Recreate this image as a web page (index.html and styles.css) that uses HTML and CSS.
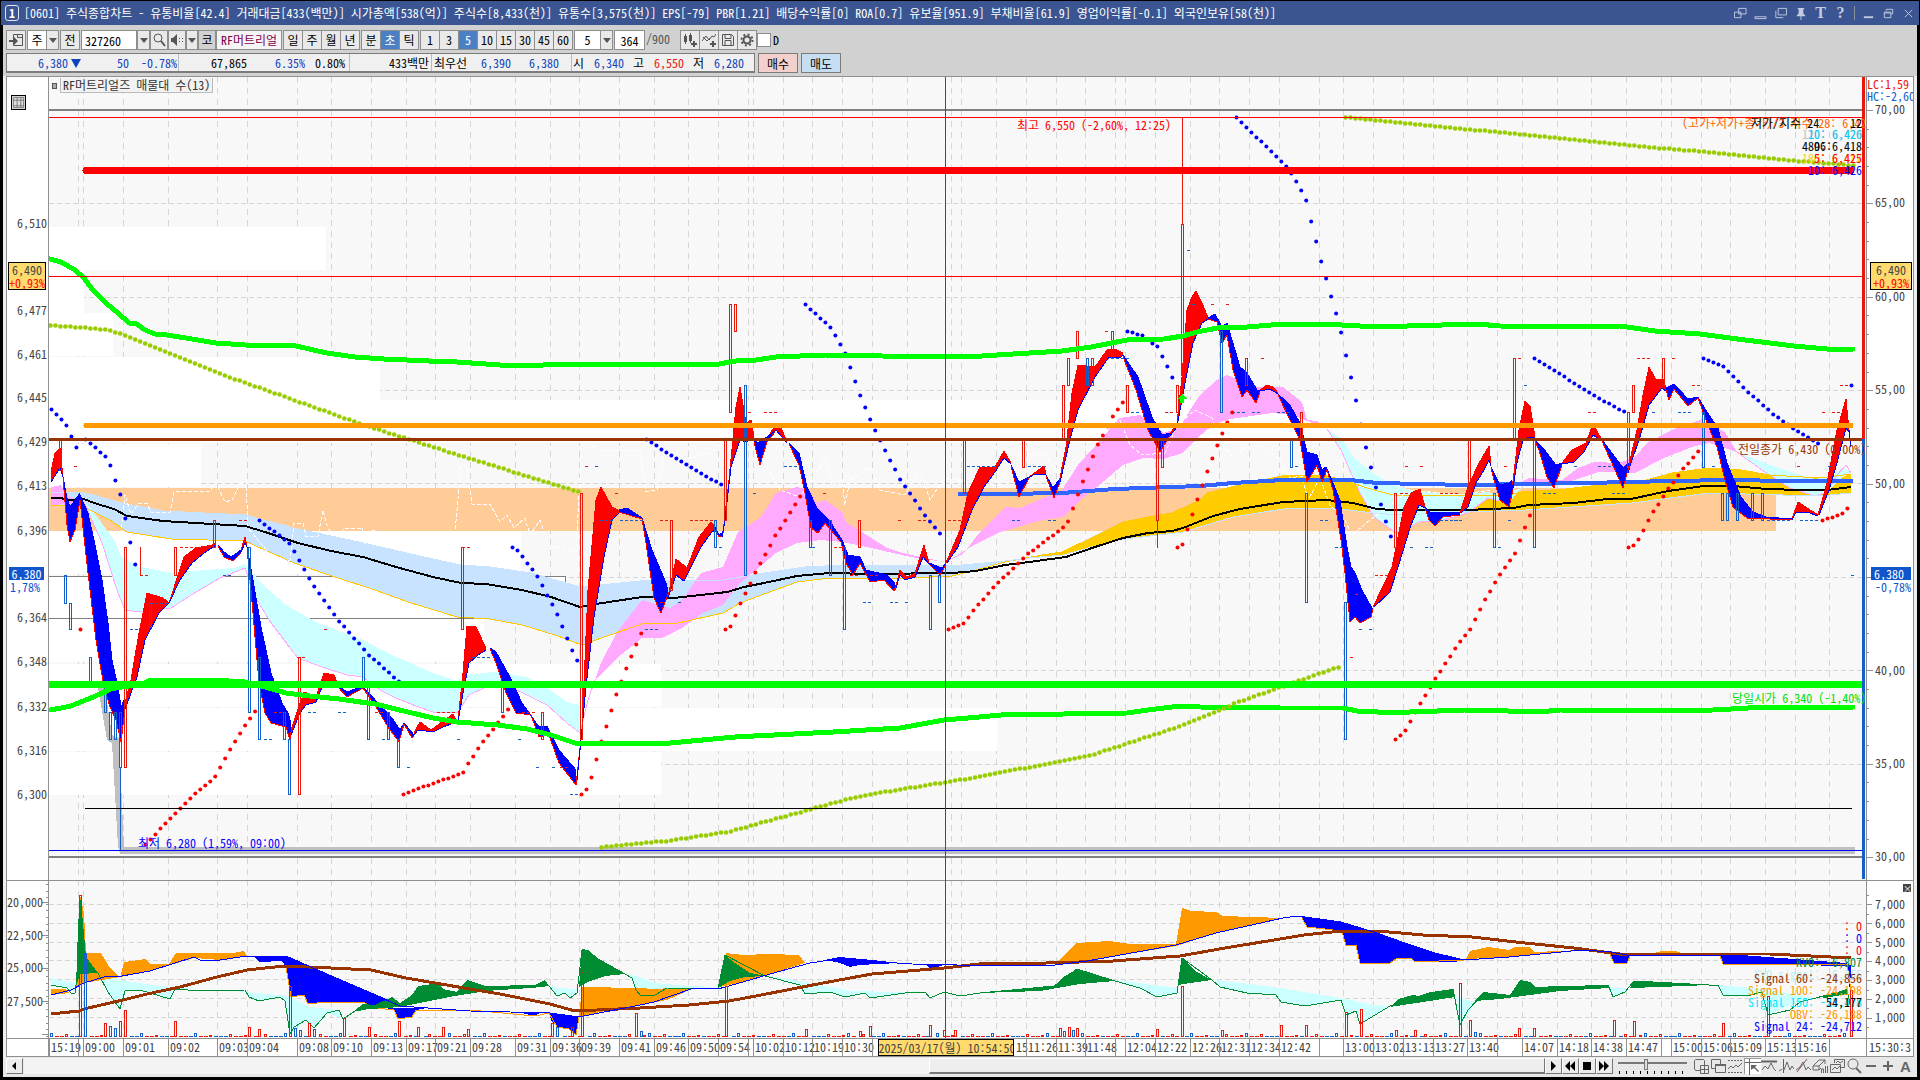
FILE: index.html
```html
<!DOCTYPE html>
<html lang="ko">
<head>
<meta charset="utf-8">
<title>[0601] 주식종합차트</title>
<link rel="stylesheet" href="styles.css">
</head>
<body>
<header class="titlebar">
  <span class="badge">1</span>
  <h1 class="title">[0601] 주식종합차트 - 유통비율[42.4] 거래대금[433(백만)] 시가총액[538(억)] 주식수[8,433(천)] 유통수[3,575(천)] EPS[-79] PBR[1.21] 배당수익률[0] ROA[0.7] 유보율[951.9] 부채비율[61.9] 영업이익률[-0.1] 외국인보유[58(천)]</h1>
  <div class="winbtns">
    <button aria-label="창 분리"><svg viewBox="0 0 14 14"><path d="M5 1.500h8v6h-8zM.5 5.500h7v6h-7z"/></svg></button>
    <button aria-label="숨기기"><svg viewBox="0 0 14 14"><path d="M1 10.500h12v2h-12z"/></svg></button>
    <button aria-label="복제"><svg viewBox="0 0 14 14"><path d="M4.500 1.500h9v7h-9zM2 4v7.500h8"/></svg></button>
    <button aria-label="고정"><svg viewBox="0 0 14 14"><path class="solid" d="M4 1h7v1l-1 1v4l2 2v1H3V9l2-2V3L4 2zM7 10h1v4H7z"/></svg></button>
    <button class="glyph" aria-label="글꼴">T</button>
    <button class="glyph" aria-label="도움말">?</button>
    <i class="sep"></i>
    <button aria-label="최소화"><svg viewBox="0 0 14 14"><path class="solid" d="M2 10h10v2H2z"/></svg></button>
    <button aria-label="이전 크기"><svg viewBox="0 0 14 14"><path d="M4.500 4V2.500h7v5H10M2.500 5.500h7v6h-7zM2 6.500h8"/></svg></button>
    <button aria-label="닫기"><svg viewBox="0 0 14 14"><path d="M3 3l8 8M11 3l-8 8"/></svg></button>
  </div>
</header>
<main class="client">
  <form class="tools">
    <button type="button" class="tb" aria-label="목록"><svg viewBox="0 0 14 14"><path d="M4.500 1.500h9v11h-9M4.500 1.500v11M8.500 1.500v3h5"/><path class="solid" d="M0 7h5V4l4 4-4 4V9H0z"/></svg></button>
    <span class="combo w32"><span>주</span><button type="button" class="arrow" aria-label="종류 선택"></button></span>
    <button type="button" class="tb">전</button>
    <input class="field w56" value="327260" aria-label="종목코드">
    <button type="button" class="arrow wide" aria-label="종목 이력"></button>
    <button type="button" class="tb slim" aria-label="종목 검색"><svg viewBox="0 0 14 14"><circle cx="6" cy="5" r="4"/><path d="M9 8l4 5" stroke-width="2"/></svg></button>
    <button type="button" class="tb slim" aria-label="음성"><svg viewBox="0 0 14 14"><path class="solid" d="M1 5h2l4-4v12L3 9H1z"/><path d="M9 5.500h1M9 8.500h1M12 5.500h1M12 8.500h1"/></svg></button>
    <button type="button" class="arrow" aria-label="음성 설정"></button>
    <span class="market">코</span><span class="name">RF머트리얼</span>
    <span class="group">
      <button type="button">일</button><button type="button">주</button><button type="button">월</button><button type="button">년</button>
    </span>
    <span class="group">
      <button type="button">분</button><button type="button" class="on">초</button><button type="button">틱</button>
    </span>
    <span class="group">
      <button type="button">1</button><button type="button">3</button><button type="button" class="on">5</button><button type="button">10</button><button type="button">15</button><button type="button">30</button><button type="button">45</button><button type="button">60</button>
    </span>
    <span class="combo w40"><span>5</span><button type="button" class="arrow" aria-label="간격 선택"></button></span>
    <input class="field w32" value="364" aria-label="표시 봉 수">
    <span class="total">/900</span>
    <span class="group icons">
      <button type="button" aria-label="지표 추가"><svg viewBox="0 0 14 14"><path class="solid" d="M1 3h3v6H1zM6 2h3v6H6z"/><path d="M2.500 1v10M7.500 0v10"/><path d="M8 11h6M11 8v6" stroke-width="2"/></svg></button>
      <button type="button" aria-label="추세 추가"><svg viewBox="0 0 14 14"><path d="M0 8l4-5 3 4 3-4 2 1 2-3M1 4l4 4 3-3"/><path d="M8 11h6M11 8v6" stroke-width="2"/></svg></button>
      <button type="button" aria-label="저장"><svg viewBox="0 0 14 14"><path d="M1.500 1.500h9l2 2v9h-11zM4 1.500v4h6v-4M4 12.500v-5h6v5"/></svg></button>
      <button type="button" aria-label="설정"><svg viewBox="0 0 14 14"><circle cx="7" cy="7" r="3.500" stroke-width="2"/><circle cx="7" cy="7" r="5.500" stroke-width="2" stroke-dasharray="2 2.300"/></svg></button>
    </span>
    <label class="check"><input type="checkbox">D</label>
  </form>
  <div class="info">
    <div class="quote">
      <span class="cell s1 dn"><b class="c72">6,380<i class="tri"></i></b><b class="c48">50</b><b class="c48">-0.78%</b></span>
      <span class="cell s2"><b class="c68">67,865</b><b class="c56 dn">6.35%</b><b class="c40">0.80%</b></span>
      <span class="cell s3"><b>433백만</b></span>
      <span class="cell s4"><b>최우선</b><b class="c44 dn">6,390</b><b class="c48 dn">6,380</b></span>
      <span class="cell s5"><b>시</b><b class="c40 dn">6,340</b><b class="c20">고</b><b class="c40 up">6,550</b><b class="c20">저</b><b class="c40 dn">6,280</b></span>
    </div>
    <button class="buy">매수</button>
    <button class="sell">매도</button>
  </div>

  <section class="chart">
    <div class="axis left main" id="leftMain">
      <button class="gridbtn" aria-label="데이터 표"><svg viewBox="0 0 14 14"><path d="M1.500 1.500h11v11h-11zM1.500 4.500h11M5.500 1.500v11M9.500 1.500v11M1.500 10.500h11"/></svg></button>
    </div>
    <div class="axis left sub" id="leftSub"></div>
    <div class="plot" id="plot">
      <svg id="canvas" viewBox="49 77 1817 961" preserveAspectRatio="none" role="img" aria-label="주가 차트"></svg>
      <div class="caption"><i></i><span>RF머트리얼즈 매물대 수(13)</span></div>
    </div>
    <div class="axis right main" id="rightMain"></div>
    <div class="axis right sub" id="rightSub"><button class="closepane" aria-label="지표 닫기">×</button></div>
    <div class="corner"></div>
    <div class="times" id="times"><span class="now">2025/03/17(월) 10:54:50</span></div>
    <div class="corner end">15:30:3</div>
  </section>

  <footer class="scroller">
    <button class="sb" aria-label="왼쪽으로"><svg viewBox="0 0 14 14"><path class="solid" d="M9 3v8L5 7z"/></svg></button>
    <div class="track"><div class="thumb"></div></div>
    <button class="sb" aria-label="재생"><svg viewBox="0 0 14 14"><path class="solid" d="M5 2v10l5-5z"/></svg></button>
    <button class="sb" aria-label="뒤로"><svg viewBox="0 0 14 14"><path class="solid" d="M7 2v10L2 7zM12 2v10L7 7z"/></svg></button>
    <button class="sb" aria-label="정지"><svg viewBox="0 0 14 14"><path class="solid" d="M3 3h8v8H3z"/></svg></button>
    <button class="sb" aria-label="앞으로"><svg viewBox="0 0 14 14"><path class="solid" d="M2 2v10l5-5zM7 2v10l5-5z"/></svg></button>
    <div class="speed"><input type="range" min="0" max="10" value="4" aria-label="속도"></div>
    <div class="pens">
      <button aria-label="추가"><svg viewBox="0 0 16 16"><path d="M7 12.500H2.500L1.500 11V2.500l1-1h8l1 1V7"/><path d="M7.500 7.500h8v8h-8zM11.500 7v8M7 11.500h8"/></svg></button>
      <button aria-label="겹치기"><svg viewBox="0 0 16 16"><path d="M1.500 1.500h9v9h-9z"/><path d="M5.500 6.500h10v8h-10z" fill="#e8e8e8"/><path class="solid" d="M5 6h11v2H5z"/></svg></button>
      <button aria-label="틀 고정"><svg viewBox="0 0 16 16"><path d="M1 2.500h14M1 14.500h14" stroke-dasharray="2 1"/><path d="M1 11l3-3 2 2 3-3 2 2 4-4"/></svg></button>
      <button class="on" aria-label="십자선"><svg viewBox="0 0 16 16"><path d="M4.500 0v16M0 3.500h16"/><path class="solid" d="M6 6h6l-2 2 4 4-1 1-4-4-3 2z"/></svg></button>
      <button aria-label="수평선"><svg viewBox="0 0 16 16"><path d="M0 3.500h16" stroke-width="2"/><path d="M1 12l3-4 3 3 3-6 3 6 2 2"/></svg></button>
      <button aria-label="수직선"><svg viewBox="0 0 16 16"><path class="hot" d="M5.500 1v14"/><path d="M1 13l3-2M6 12l3-8 3 8 2-4 2 3"/></svg></button>
      <button aria-label="추세선"><svg viewBox="0 0 16 16"><path class="hot" d="M2 14L12 1"/><path d="M1 12l4-3 3-5 3 8 2-3 3 3"/></svg></button>
      <button aria-label="모두 지우기"><svg viewBox="0 0 16 16"><path d="M1 8l6-6h6l-6 6zM1 8v4h6V8M7 12l2-2M13 2v4M9.500 15v-4h2v4M13.500 8v7M15.500 8v7"/></svg></button>
      <button aria-label="이미지"><svg viewBox="0 0 16 16"><path d="M5.500 5V1.500h10v8H12M1.500 6.500h10v8h-10z"/><path d="M3 12l3-3 2 2 3-3M7 5l2-2 2 2 3-2"/></svg></button>
      <button aria-label="돋보기"><svg viewBox="0 0 16 16"><circle cx="7" cy="6" r="5"/><path d="M10 10l5 5" stroke-width="2"/></svg></button>
      <button aria-label="축소"><svg viewBox="0 0 16 16"><path class="solid" d="M3 7h10v2H3z"/></svg></button>
      <button aria-label="확대"><svg viewBox="0 0 16 16"><path class="solid" d="M3 7h4V3h2v4h4v2H9v4H7V9H3z"/></svg></button>
      <button class="auto" aria-label="자동">A</button>
    </div>
  </footer>
</main>
<script src="chart.js"></script>
</body>
</html>
```

FILE: styles.css
```css
* { box-sizing: border-box; }
body {
  margin: 0;
  padding: 1px 1px 3px;
  min-height: 100vh;
  display: flex;
  flex-direction: column;
  background: #000;
  color: #000;
  font: 12px/18px "Noto Sans Mono CJK KR", "Noto Sans CJK KR", sans-serif;
  overflow: hidden;
}
button, input { font: inherit; color: inherit; margin: 0; padding: 0; border-radius: 0; }
button { border: 0; background: none; }
svg { display: block; fill: none; stroke: currentColor; }
svg .solid { fill: currentColor; stroke: none; }

.titlebar { display: flex; align-items: center; height: 24px; padding: 0 4px; gap: 5px; background: #3a5591; color: #fff; white-space: nowrap; }
.badge { width: 14px; height: 16px; line-height: 14px; border: 1px solid #dfe6f5; border-radius: 3px; text-align: center; font-weight: bold; }
.title { margin: 0; font-size: 12px; font-weight: normal; flex: 1; overflow: hidden; }
.winbtns { display: flex; align-items: center; gap: 7px; color: #c2cbe2; }
.winbtns button { width: 13px; height: 14px; }
.winbtns .glyph { font: bold 16px/14px "Liberation Serif", serif; }
.winbtns .sep { width: 1px; height: 14px; background: #8a8f9c; }

.client { flex: 1; display: flex; flex-direction: column; margin: 0 2px; background: #d1d1d1; }

.tools { display: flex; height: 20px; margin: 5px 3px 3px; white-space: nowrap; }
.tools > * { height: 20px; flex: none; }
.tb, .group button, .combo, .field, .market, .name, .arrow { border: 1px solid #8e8e8e; background: #e9e9e9; text-align: center; }
.tb { width: 20px; margin-right: 1px; }
.tb.slim { width: 18px; margin-right: 0; }
.tb svg, .group svg { width: 14px; height: 14px; margin: 0 auto; color: #555; }
.combo { display: flex; background: #fff; margin-right: 1px; }
.combo > span { flex: 1; }
.combo .arrow { border-width: 0 0 0 1px; height: 18px; }
.w32 { width: 32px; }
.w40 { width: 39px; }
.w56 { width: 56px; }
.field { background: #fff; text-align: left; padding-left: 3px; }
.field.w32 { width: 31px; text-align: center; padding: 0; }
.arrow { width: 12px; }
.arrow::after { content: ""; display: block; width: 0; margin: 0 auto; border: 4px solid transparent; border-top: 5px solid #555; border-bottom: 0; }
.arrow.wide { width: 13px; }
.market { width: 18px; background: #d1d1d1; }
.name { width: 66px; background: #f4f4f4; color: #80004d; margin-right: 1px; overflow: hidden; }
.group { display: flex; margin-right: 1px; }
.group button { width: 20px; margin-right: -1px; }
.group button:last-child { margin-right: 0; }
.group .on { background: #4b80c4; color: #fff; }
.total { width: 33px; color: #555; padding-left: 1px; }
.icons { margin-left: 2px; margin-right: 0; }
.check { display: flex; align-items: center; gap: 2px; }
.check input { appearance: none; width: 14px; height: 14px; border: 1px solid #8e8e8e; background: #fff; }

.info { display: flex; height: 20px; margin: 0 3px 3px; gap: 3px; white-space: nowrap; line-height: 17px; }
.quote { display: flex; width: 749px; background: #f0f0f0; border: 1px solid #7c7c7c; border-width: 1px 1px 2px; }
.cell { display: flex; border-right: 1px solid #bbb; }
.cell:last-child { border: 0; }
.cell b { font-weight: normal; text-align: right; }
.s1 { width: 172px; }
.s2 { width: 171px; }
.s3 { width: 82px; justify-content: flex-end; padding-right: 2px; }
.s4 { width: 140px; padding-left: 2px; }
.s5 { padding-left: 1px; }
.c72 { width: 74px; }
.c68 { width: 68px; }
.c56 { width: 58px; }
.c48 { width: 48px; }
.c44 { width: 44px; }
.c40 { width: 40px; }
.c20 { width: 20px; }
.dn { color: #1144bb; }
.up { color: #e0200c; }
.tri { display: inline-block; margin-left: 3px; border: 5px solid transparent; border-top: 9px solid #1144bb; border-bottom: 0; }
.buy, .sell { width: 40px; border: 1px solid #7c7c7c; background: #f4d0cc; }
.sell { background: #c6def4; }

.chart {
  flex: 1;
  display: grid;
  grid-template-columns: 43px 1fr 48px;
  grid-template-rows: 804fr 158fr 19px;
  padding: 0 3px;
  background: #eee;
  color: #444;
}
.chart > * { background: #fff; border: 0 solid #909090; }
.axis { position: relative; overflow: hidden; }
.left { grid-column: 1; border-width: 1px 1px 0 1px; }
.right { grid-column: 3; border-width: 1px 1px 0 1px; }
.main { grid-row: 1; }
.sub { grid-row: 2; }
.plot { grid-column: 2; grid-row: 1 / 3; position: relative; overflow: hidden; border-top-width: 1px; background: #f8f8f8; }
.plot > svg { position: absolute; inset: 0; width: 100%; height: 100%; stroke: none; }
.axis svg.ticks { position: absolute; inset: 0; width: 100%; height: 100%; stroke: #909090; }
.corner { grid-column: 1; grid-row: 3; border-width: 1px 1px 1px 1px; }
.corner.end { grid-column: 3; padding-left: 2px; line-height: 16px; overflow: hidden; white-space: nowrap; }
.times { grid-column: 2; grid-row: 3; position: relative; overflow: hidden; border-width: 1px 0 1px; }

.lab { position: absolute; height: 14px; line-height: 14px; margin-top: -7px; white-space: nowrap; }
.left .lab { right: 1px; }
.left.sub .lab { right: 5px; }
.right .lab { left: 8px; }
.right .lab.flush { left: 0; }
.lab.hi { color: #e8180c; }
.lab.lo { color: #1460c8; }
.box { position: absolute; width: 38px; margin-top: -14px; line-height: 13px; height: 28px; text-align: center; border: 1px solid #000; background: #ffdb6e; white-space: nowrap; }
.left .box { left: 1px; }
.right .box { left: 3px; width: 42px; }
.box em { display: block; font-style: normal; color: #f00; }
.cur { position: absolute; left: 2px; width: 35px; height: 13px; line-height: 13px; margin-top: -7px; text-align: center; background: #1155cc; color: #fff; }
.right .cur { left: 4px; width: 40px; text-align: left; padding-left: 3px; }
.pct { color: #1155cc; }
.left .lab.pct { left: 3px; right: auto; }

.time { position: absolute; top: 0; height: 17px; line-height: 16px; padding-left: 1px; border-left: 1px solid #909090; }
.now { position: absolute; left: 45.600%; z-index: 1; top: 0; width: 136px; height: 17px; line-height: 15px; border: 1px solid #000; background: #ffdb6e; text-align: center; white-space: nowrap; overflow: hidden; }
.note { position: absolute; line-height: 14px; margin-top: -7px; white-space: nowrap; }

.caption { position: absolute; left: 3px; top: 1px; display: flex; align-items: center; gap: 3px; color: #333; }
.caption i { width: 5px; height: 6px; border: 1px solid #555; background: #aaa; }
.caption span { height: 15px; line-height: 14px; padding: 0 2px; border: 1px solid #bbb; border-top: 0; background: #f2f2f2; }
.gridbtn { position: absolute; left: 4px; top: 18px; width: 15px; height: 15px; border: 1px solid #000; background: #ddd; color: #777; }
.closepane { position: absolute; right: 2px; top: 3px; width: 8px; height: 8px; line-height: 7px; font-size: 9px; color: #fff; background: #444; }

.scroller { display: flex; height: 20px; padding: 1px 3px 3px; background: #e8e8e8; }
.sb { width: 17px; height: 16px; border: 1px solid #fff; border-right-color: #777; border-bottom-color: #777; background: #ececec; color: #000; }
.sb svg { width: 14px; height: 14px; }
.track { flex: 1; display: flex; justify-content: flex-end; margin-left: 1px; background: #f3f3f3; }
.thumb { width: 40.500%; border: 1px solid #fff; border-right-color: #777; border-bottom: 2px solid #777; background: #eee; }
.speed { width: 80px; padding: 0 5px; background: repeating-linear-gradient(90deg, #000 0 1px, transparent 1px 7px) 6px 13px / 67px 3px no-repeat; }
.speed input { appearance: none; display: block; width: 69px; height: 12px; background: linear-gradient(#777, #777) 0 4px / 100% 2px no-repeat; }
.speed input::-webkit-slider-thumb { appearance: none; width: 4px; height: 11px; border: 1px solid #777; background: #ddd; }
.pens { display: flex; color: #666; }
.pens button { width: 17px; height: 16px; }
.pens svg { width: 16px; height: 16px; }
.pens .hot { stroke: #805060; }
.pens .on { background: #fff; border: 1px solid #999; border-width: 1px 0 0 1px; }
.pens .auto { font: bold 15px/15px "Liberation Sans", sans-serif; }
```

FILE: chart.js
```js
const NS = 'http://www.w3.org/2000/svg';
const svg = document.getElementById('canvas');
const plot = document.getElementById('plot');
const VX = 49, VY = 77, VW = 1817, VH = 961;
const RED = '#ff0000', BLUE = '#0000ff', UP = '#e8180c', DOWN = '#1460c8';

function add(tag, attrs, parent = svg) {
  const el = document.createElementNS(NS, tag);
  for (const k in attrs) el.setAttribute(k, attrs[k]);
  parent.appendChild(el);
  return el;
}
const pts = s => s.trim().split(/\s+/).map(p => p.split(',').map(Number));
const poly = (s, fill) => add('polygon', { points: s, fill, 'shape-rendering': 'crispEdges' });
const line = (s, stroke, w = 1, extra = {}) =>
  add('polyline', { points: s, fill: 'none', stroke, 'stroke-width': w, 'stroke-linejoin': 'round', 'shape-rendering': 'crispEdges', ...extra });
const rect = (x, y, w, h, fill) => add('rect', { x, y, width: w, height: h, fill });
const hollow = (x, y1, y2, c) =>
  add('rect', { x: x - .5, y: y1 + .5, width: 2, height: Math.max(1, y2 - y1), fill: 'none', stroke: c, 'stroke-width': 1 });

const gridX = [78,83,123,168,217,247,297,331,371,406,435,470,515,550,579,619,654,688,718,748,753,783,812,842,872,907,951,961,996,1026,1056,1085,1115,1125,1155,1190,1219,1249,1279,1319,1343,1373,1403,1433,1467,1497,1522,1557,1591,1626,1661,1671,1701,1730,1765,1795,1829];
const vgrid = { 'stroke-dasharray': '6 5' };
gridX.forEach(x => line(`${x + .5},77 ${x + .5},1038`, '#d6d6d6', 1, vgrid));
[203,297,390,483,577,670,764,904,923,942,960,979,998,1017].forEach(y => line(`49,${y + .5} 1862,${y + .5}`, '#d6d6d6', 1, { 'stroke-dasharray': '5 3' }));

/* price-volume bands */
[[227,326],[270,84],[313,113],[357,380],[400,1627],[444,201],[488,1776],[531,521],[576,566],[619,484],[664,661],[708,997],[752,661]]
  .forEach(([y, x], i) => rect(49, y, x - 49, 43, i === 6 ? '#ffcb97' : '#ffffff'));
line('49,576.5 565.5,576.5 565.5,584', '#808080');
line('49,618.5 480,618.5', '#808080');

poly('98,688 105,688 112,735 119,738 124,847 1855,847 1855,854 120,854 118,846 112,743 107,740', '#c0c0c0');
rect(49, 109, 1813, 2, '#808080');
rect(49, 856, 1813, 2, '#808080');

/* long-term band */
const paleTop = '51,492 82,492 122,503 163,511 245,515 298,529 359,542 433,559 461,565 490,567 531,573 580,587 640,581 723,580 764,573 805,567 846,565 952,566 1005,561 1029,558 1063,555 1117,540 1183,532 1233,517 1283,509 1333,508 1373,513 1400,515 1468,512 1525,510 1631,503 1709,493 1819,496 1851,493';
const gold = '51,505 84,507 110,520 127,532 171,539 245,541 294,563 335,577 375,590 408,602 457,617 490,619 522,625 555,635 582,645 604,637 642,624 678,623 723,613 740,603 764,594 797,582 829,578 907,578 952,576 980,569 1005,562 1042,555 1062,552 1091,538 1123,522 1148,517 1172,513 1200,500 1207,493 1247,483 1287,475 1327,476 1350,482 1367,488 1393,495 1467,496 1509,495 1521,492 1566,489 1607,484 1635,483 1672,473 1709,468 1741,470 1770,475 1819,478 1851,474';
const part = (s, a, b) => pts(s).filter(p => p[0] >= a && p[0] <= b);
const between = (s1, s2, a, b, fill) => poly([...part(s1, a, b), ...part(s2, a, b).reverse()].join(' '), fill);
between(paleTop, gold, 51, 1010, '#c8e3ff');
between(paleTop, gold, 1029, 1851, '#ffcc00');

/* mid-term band */
const PINK = '#ffaaff', ICE = '#ccffff';
poly('51,487 61,485 67,495 80,503 67,505 61,504 51,506', PINK);
poly('84,500 98,518 114,540 122,557 137,566 171,573 204,570 235,568 245,564 261,583 286,605 318,623 363,640 392,655 433,673 457,681 465,675 494,672 527,677 547,688 567,702 580,705 580,733 567,723 547,705 527,695 506,685 486,687 469,695 457,713 433,712 416,706 396,698 380,690 363,677 347,675 322,667 298,658 290,648 269,620 253,593 245,568 220,578 196,592 171,608 139,612 125,610 118,593 102,543 84,502', ICE);
line('580,733 567,723 547,705 527,695 506,685 486,687 469,695 457,713 433,712 416,706 396,698 380,690 363,677 347,675 322,667 298,658 290,648 269,620 253,593 245,568 220,578 196,592 171,608 139,612 125,610 118,593 102,543 84,502', PINK);
line('580,733 588,700 595,680', PINK);
poly('595,680 601,663 617,632 642,600 670,608 682,600 701,573 723,567 738,532 760,518 776,493 797,487 809,490 817,503 825,500 842,512 846,522 862,532 887,548 903,553 944,562 911,557 862,546 842,542 821,540 797,543 776,553 756,570 740,583 723,605 703,613 682,628 662,638 642,638 617,658', PINK);
poly('946,562 964,553 976,537 1005,507 1021,508 1042,498 1060,493 1078,465 1103,437 1119,418 1140,415 1156,427 1164,433 1180,427 1190,410 1200,395 1217,380 1227,375 1247,383 1257,387 1283,387 1302,402 1307,420 1317,421 1327,429 1293,415 1273,413 1230,419 1213,425 1197,438 1183,453 1163,459 1143,458 1123,465 1097,487 1080,500 1063,517 1043,520 1000,532 976,544', PINK);
poly('1327,429 1343,440 1353,457 1373,473 1393,485 1419,492 1464,494 1488,492 1500,495 1521,488 1509,503 1488,498 1468,513 1443,520 1419,522 1396,533 1374,517 1360,493 1341,450', ICE);
line('1327,429 1341,450 1360,493 1374,517 1396,533 1419,522 1443,520 1468,513 1488,498 1509,503', PINK);
poly('1521,482 1529,478 1562,480 1578,468 1594,462 1619,463 1635,457 1647,443 1672,430 1700,420 1725,432 1737,452 1709,443 1692,447 1664,458 1635,473 1598,472 1566,483', PINK);
poly('1737,452 1770,465 1794,473 1815,479 1827,477 1843,468 1851,473 1843,477 1827,492 1815,496 1790,488 1762,470', ICE);
line('1737,452 1762,470 1790,488 1815,496 1827,492 1837,475 1846,465 1851,473', PINK);
line(gold, '#ffc800');
line(paleTop, '#c8e3ff');

/* leading-span traces */
const dash = { 'stroke-dasharray': '4 2' };
line('120,540 125,495 131,514 139,503 147,503 151,512 170,512 174,492 210,491 216,483 225,502 232,500 240,484 246,482 248,528 262,545 274,560 290,560 294,523 303,523 306,537 318,536 323,510 328,529 340,536 344,528 362,528 366,544 373,530 382,536 400,540 415,533 455,532 461,465 467,466 472,504 490,504 500,522 507,515 514,528 525,518 530,535 540,520 548,545 576,552 582,440 600,450 640,450 646,492 657,490 665,452 680,460 710,453 716,448 730,430', '#fff', 1, dash);
line('760,455 780,490 800,497 826,458 832,485 842,480 845,505 850,480 870,467 880,490 905,495 920,470 930,500 944,478 1000,486 1010,460 1020,454 1045,454 1055,470 1066,424 1108,425 1120,420 1130,445 1142,455 1165,453 1177,425 1195,410 1212,418 1222,443 1232,457 1246,447 1262,446 1280,460 1290,478 1302,476 1308,500 1320,478 1330,505 1345,520 1352,535 1370,520 1390,505 1410,490 1430,492 1460,495 1490,490', '#fff', 1, dash);

line('51,498 61,498 67,500 84,499 94,503 114,509 127,516 163,521 212,524 245,526 265,532 298,543 331,551 363,557 396,567 433,577 461,583 486,584 522,590 551,597 580,607 596,604 642,597 674,598 727,592 744,587 764,583 797,576 829,573 870,574 952,573 976,571 1005,565 1029,562 1066,557 1095,547 1123,538 1148,533 1172,531 1183,528 1213,516 1240,509 1283,502 1327,500 1353,503 1377,509 1393,510 1467,510 1513,508 1529,505 1574,503 1607,499 1631,499 1668,491 1704,486 1733,486 1766,489 1802,490 1827,490 1851,487', '#000', 2);
line('958,494 1005,494 1062,493 1115,489 1200,486 1233,483 1283,480 1350,480 1377,483 1467,485 1586,483 1672,481 1729,480 1790,481 1853,481', '#3264ff', 4);

/* short-term ribbon: upper edge / lower edge */
const up = [
 '51,472 55,453 60,448 63,477|51,482 60,468 63,477',
 '124,707 131,680 139,633 147,593 163,598 169,603 184,557 196,548 212,545 216,543|124,712 137,677 145,640 159,613 169,603 180,580 192,563 204,553 216,545',
 '241,550 245,537 247,547|241,552 245,543 247,547',
 '291,730 296,715 304,692 316,697 324,673 334,675 338,685|291,735 300,713 306,705 316,702 322,687 338,686',
 '414,733 420,722 431,730 453,714 457,722|414,735 418,730 433,732 443,727 457,722',
 '458,720 463,673 467,626 476,627 486,648|458,722 463,693 469,663 478,655 486,650',
 '576,785 582,730 588,590 596,500 601,487 612,507 620,511|577,780 580,750 586,687 594,617 604,557 612,520 620,512',
 '668,597 676,559 687,568 699,537 711,522 715,527|668,598 676,575 684,581 701,547 711,533 715,530',
 '721,537 723,533 729,480 736,407 740,387 746,423 751,420 754,437|722,537 725,520 731,467 740,440 746,442 754,438',
 '768,437 776,424 780,425 787,442|768,438 776,430 787,443',
 '895,590 900,570 907,577 915,573 924,545 929,563|896,588 900,575 905,580 915,577 923,557 929,564',
 '946,563 960,530 968,493 980,467 995,467 1004,451 1011,463|947,563 958,547 972,510 984,487 995,472 1004,458 1011,464',
 '1029,477 1044,466 1046,473|1029,478 1033,475 1046,474',
 '1059,483 1066,447 1072,393 1078,365 1095,367 1107,350 1115,349 1123,353|1060,482 1070,440 1078,410 1095,377 1109,357 1121,357 1123,355',
 '1168,437 1177,423 1182,377 1187,310 1192,297 1196,291 1202,303 1208,318|1169,437 1177,427 1180,410 1187,373 1193,343 1202,323 1208,319',
 '1260,390 1267,385 1273,387 1278,393|1260,391 1270,389 1278,394',
 '1373,607 1386,580 1392,567 1398,537 1404,507 1411,493 1420,489 1425,507|1374,607 1390,592 1398,567 1411,525 1419,505 1425,508',
 '1460,513 1468,487 1478,465 1489,446 1491,465|1461,513 1468,507 1476,483 1484,470 1489,460 1491,466',
 '1512,490 1519,430 1525,401 1530,406 1535,437|1513,488 1517,463 1523,440 1529,437 1535,438',
 '1562,463 1572,450 1586,443 1593,424 1602,440|1562,464 1574,462 1584,452 1593,435 1602,441',
 '1627,473 1637,430 1643,395 1649,367 1656,380 1664,379 1666,390|1628,473 1631,463 1639,440 1649,405 1662,388 1666,391',
 '1792,519 1798,502 1818,515|1792,520 1796,512 1807,512 1818,516',
 '1818,515 1827,483 1837,430 1846,399 1849,430|1819,515 1829,490 1837,463 1846,428 1849,432'
];
const down = [
 '63,477 67,498 70,507 75,500 80,493|63,478 67,525 70,542 75,530 80,500',
 '80,495 88,513 94,540 102,580 108,623 112,660 118,687 121,707 124,700|80,500 88,573 96,640 104,687 110,707 116,720 121,742 124,717',
 '218,545 224,552 231,557 241,550|218,546 224,557 233,561 241,553',
 '247,547 253,580 261,627 271,673 282,703 288,713 291,723|247,548 251,590 259,683 265,713 271,723 286,727 290,740 291,732',
 '338,686 347,692 363,686|338,687 347,697 363,688',
 '363,687 380,705 392,718 400,730 404,723 414,735|363,688 376,707 388,727 399,742 404,724 412,738 414,736',
 '490,648 496,652 510,677 522,703 539,727 547,726 559,750 576,770|490,649 496,663 506,693 516,713 531,715 539,737 549,735 559,763 576,785',
 '619,510 627,508 642,518 652,550 666,583 668,590|619,512 642,519 646,543 654,598 661,613 668,594',
 '715,527 719,535 722,533|715,530 719,537 722,536',
 '754,440 758,443 767,437 775,431|754,442 756,450 760,465 767,442 775,432',
 '789,443 799,453 807,487 817,508 829,520 842,540 848,555 860,557 866,570 887,575 895,583|789,444 799,465 805,493 811,528 818,533 825,523 841,542 846,563 853,575 860,563 870,582 884,580 894,591 896,586',
 '929,563 942,568 946,563|929,564 940,575 946,565',
 '1011,465 1019,482 1029,477|1011,466 1019,497 1029,478',
 '1046,475 1053,488 1059,480|1046,476 1054,498 1060,482',
 '1123,355 1138,377 1152,417 1162,435 1170,433|1123,356 1125,362 1136,390 1148,430 1160,452 1170,435',
 '1208,318 1215,314 1222,327 1227,323 1240,367 1247,373 1257,390 1260,390|1208,319 1217,322 1222,343 1227,335 1233,370 1242,397 1247,390 1256,403 1260,392',
 '1278,394 1290,405 1300,423 1307,452 1317,455 1322,470 1326,467 1333,483 1340,500 1347,547 1351,567 1355,573 1362,590 1372,608|1278,395 1290,420 1300,440 1307,482 1317,465 1322,482 1327,470 1333,490 1341,540 1345,573 1350,622 1355,617 1360,623 1371,617 1373,609',
 '1425,507 1431,513 1447,512 1460,513|1425,508 1429,520 1435,526 1443,517 1460,515',
 '1491,467 1500,485 1509,483 1512,480|1491,468 1494,480 1500,500 1509,507 1513,490',
 '1535,440 1543,448 1556,465 1562,463|1535,441 1539,450 1547,477 1554,488 1562,465',
 '1602,440 1623,468 1629,463|1602,441 1615,470 1623,488 1629,466',
 '1666,388 1674,384 1688,399 1698,397|1666,390 1669,400 1674,389 1688,406 1698,398',
 '1698,397 1707,412 1718,428 1727,463 1741,497 1753,512 1766,517 1792,519|1698,398 1707,423 1717,447 1725,480 1733,507 1747,518 1792,520'
];
const ribbon = (s, fill, top, bottom) => {
  const [a, b] = s.split('|');
  poly([...pts(a), ...pts(b).reverse()].join(' '), fill);
  line(a, top);
  line(b, bottom);
};
up.forEach(s => ribbon(s, RED, RED, BLUE));
down.forEach(s => ribbon(s, BLUE, BLUE, RED));
line('1849,430 1851,447', BLUE);

/* candles: x, top, bottom */
const upC = '60,440,470 125,547,767 175,547,575 214,520,547 299,657,794 462,547,629 542,712,739 581,493,739 671,520,590 725,440,520 730,304,412 735,304,331 859,520,547 964,440,493 1023,440,467 1063,385,440 1068,358,385 1077,331,358 1092,358,385 1127,385,412 1177,385,412 1157,440,520 1162,440,467 1182,224,375 1246,358,385 1301,412,440 1395,493,547 1469,440,493 1514,358,440 1628,412,467 1633,385,412 1663,358,385';
const downC = '65,575,603 70,603,629 90,657,682 105,687,712 110,712,739 115,712,739 120,712,767 150,603,627 249,547,712 259,657,739 284,712,739 289,739,794 363,657,687 368,687,739 388,712,739 398,739,767 502,687,712 715,520,547 745,385,575 810,520,547 830,520,575 844,547,629 930,575,629 939,575,602 1087,358,385 1112,331,358 1221,331,412 1291,440,467 1306,493,602 1494,493,547 1345,602,739 1534,440,547 1703,412,467 1722,493,520 1727,493,520 1737,493,520 1752,493,520 1762,493,520';
pts(upC).forEach(([x, a, b]) => hollow(x, a, b, UP));
pts(downC).forEach(([x, a, b]) => hollow(x, a, b, DOWN));
line('140.5,547 140.5,575', UP);
line('1182.5,117 1182.5,224', UP);
line('1157.5,520 1157.5,548', UP);
line('120.5,767 120.5,850', DOWN);

/* flat bars: x, y, count */
pts('74,466,1 140,575,2 180,547,6 239,520,2 324,629,1 297,657,2 274,712,2 375,712,2 437,712,4 522,712,3 462,547,2 560,767,2 585,466,1 615,493,1 660,520,2 690,520,5 764,412,3 748,412,1 823,493,1 834,547,2 898,520,1 918,520,2 948,520,3 1165,412,2 1105,331,1 1211,304,1 1226,304,1 1261,358,1 1375,575,4 1355,594,1 1350,657,1 1405,466,1 1420,466,1 1400,493,3 1440,493,4 1504,466,1 1518,358,1 1588,412,2 1637,358,3 1672,358,1 1692,385,2 1797,466,1 1822,412,1 1832,412,2 1840,385,2 660,602,1 850,575,2 870,575,2').forEach(([x, y, n]) => { for (let i = 0; i < n; i++) rect(x + i * 5, y, 3, 1, UP); });
pts('595,466,1 130,629,2 223,575,2 150,603,4 308,712,2 338,712,2 264,739,2 382,739,2 407,767,1 457,739,1 472,657,4 518,739,1 536,767,1 552,767,1 570,794,2 600,520,3 620,520,5 645,629,3 678,602,1 719,547,1 753,493,1 784,466,3 812,547,1 863,602,2 890,602,2 905,602,1 967,466,6 1028,466,4 1012,520,2 1048,520,2 1116,358,3 1131,412,2 1192,304,1 1187,250,1 1200,331,3 1232,412,3 1252,412,2 1277,412,3 1295,466,1 1320,520,2 1335,547,2 1359,629,1 1369,629,1 1410,547,1 1425,547,2 1440,520,4 1454,520,2 1508,520,1 1498,547,1 1543,493,3 1574,466,1 1524,385,1 1598,466,3 1612,493,3 1652,412,1 1678,412,3 1712,466,1 1767,520,5 1800,520,4 1828,466,1 1851,575,1').forEach(([x, y, n]) => { for (let i = 0; i < n; i++) rect(x + i * 5, y, 3, 1, DOWN); });

/* dotted series, one dot per bar */
function dots(s, fill, r) {
  const p = pts(s);
  let x = p[0][0], k = 0;
  while (x <= p[p.length - 1][0] + 1) {
    while (k < p.length - 2 && x > p[k + 1][0]) k++;
    const a = p[k], b = p[k + 1] || a;
    const y = a === b ? a[1] : a[1] + (b[1] - a[1]) * Math.min(1, (x - a[0]) / (b[0] - a[0]));
    add('circle', { cx: x + .5, cy: Math.round(y) + .5, r, fill });
    x += 4.980;
  }
}
['51,409 65,423 70,433 75,447','85,439 105,456 110,465 115,480 120,494 125,519 130,543 135,565','259,520 289,543 299,560 313,585 338,620 368,654 398,681','512,547 517,550 537,576 557,614 576,660','646,439 666,452 691,467 720,484','805,304 819,317 829,325 834,334 844,351 859,393 874,429 899,478 924,514 943,537','1127,331 1142,335 1152,343 1157,346 1172,377','1236,117 1286,166 1296,181 1306,201 1311,222 1321,262 1340,329 1355,398 1365,445 1375,486 1385,520 1390,536','1534,358 1554,370 1593,395 1623,411','1703,358 1722,365 1747,391 1772,413 1797,431 1817,443','1851,385'].forEach(s => dots(s, BLUE, 2));
['80,629','145,844 165,823 194,794 214,777 229,750 244,726 254,711','403,794 432,783 462,773 467,764 482,742 502,717 507,709','581,794 586,789 591,777 601,741 616,694 631,655 641,632','725,629 730,626 740,603 755,572 775,535 800,496','948,629 963,623 973,610 993,587 1028,553 1063,527 1068,520 1082,482 1097,445 1112,417 1122,402','1177,547 1182,544 1192,514 1201,487 1216,447 1231,412','1395,739 1405,730 1420,703 1435,678 1459,642 1469,630 1484,600 1499,575 1514,554 1529,515','1628,547 1633,545 1638,539 1653,511 1668,488 1683,468 1698,451','1822,520 1842,513 1846,508'].forEach(s => dots(s, RED, 2));

/* envelope and levels */
line('50,259 61,262 75,270 84,278 92,289 106,303 118,313 129,323 137,324 145,330 155,334 167,335 192,339 216,343 245,345 296,346 327,353 355,357 384,359 429,361 457,362 500,365 543,365 547,364 719,364 736,361 756,360 776,357 825,355 882,356 968,357 997,355 1062,351 1091,347 1127,340 1164,339 1183,336 1197,332 1217,328 1247,327 1283,324 1323,324 1360,326 1407,326 1477,324 1500,326 1560,327 1620,326 1655,331 1700,334 1745,340 1770,343 1794,346 1827,349 1853,349', '#00ff00', 5, { 'stroke-linecap': 'round' });
line('50,710 61,708 71,706 86,700 98,695 110,689 122,687 143,684 151,680 175,681 212,680 245,682 265,687 286,693 310,696 339,699 375,704 408,712 433,718 457,722 498,725 527,729 551,735 575,743 640,743 670,743 735,737 833,732 900,728 944,720 968,718 1001,715 1127,713 1148,710 1180,706 1200,707 1280,708 1343,708 1357,711 1378,712 1410,712 1464,710 1508,711 1549,711 1560,710 1672,711 1713,710 1766,707 1827,707 1853,707', '#00ff00', 5, { 'stroke-linecap': 'round' });
['50,325 82,327 110,330 127,336 171,354 216,372 359,423 437,448 547,482 581,492','601,847 640,843 671,840 729,831 857,796 980,776 1090,755 1182,725 1237,702 1296,681 1340,666','1345,117 1500,132 1640,146 1702,151 1803,161 1852,165'].forEach(s => dots(s, '#99cc00', 2.300));
line('49,684.5 1862,684.5', '#00ff00', 7);
line('85,808.5 1852,808.5', '#000');
line('86,170.5 1851,170.5', RED, 7, { 'stroke-linecap': 'round' });
line('86,425.5 1851,425.5', '#ff9900', 5, { 'stroke-linecap': 'round' });
line('49,439.5 1863,439.5', '#993300', 3);
line('49,117.5 1863,117.5', RED);
line('49,850.5 1863,850.5', BLUE);
poly('1182,394 1187,399 1184,399 1184,403 1180,403 1180,399 1177,399', '#00ff00');

/* lower pane */
const ORANGE = '#ff9900', GREEN = '#008c33';
['51,978 75,983 75,992 67,989 51,985','98,973 110,978 125,981 160,986 200,989 245,992 290,996 310,1007 339,1010 343,1019 327,1013 314,1028 306,1020 290,1034 285,1001 280,997 259,1001 249,997 245,990 175,989 170,999 140,990 125,991 120,1009 108,992','549,985 557,988 577,989 578,993 570,998 565,993 557,996','625,974 640,977 654,983 690,986 718,987 667,990 655,995 641,996 636,990 632,978','770,976 800,981 850,991 900,992 925,991 905,993 870,998 865,993 845,997 830,992 805,994 800,985','1115,980 1178,988 1177,993 1157,997 1140,988','1215,980 1250,984 1280,988 1341,998 1374,1005 1390,1006 1360,1024 1356,1011 1346,1015 1341,1000 1305,1006 1281,1002 1276,995 1247,993 1220,987','1455,997 1475,1002 1468,1015 1460,1025 1457,1000','1609,987 1629,989 1625,992 1613,997','1718,985 1764,989 1815,998 1790,1005 1768,1015 1762,992 1747,996 1723,995'].forEach(s => poly(s, ICE));
['51,989 65,989 70,993 51,995','76,988 78,950 80,895 84,913 86,953 101,953 110,968 120,978 124,962 145,959 151,964 169,964 176,953 233,953 244,951 247,956 220,960 194,958 147,972 120,977 84,983','579,1017 582,987 640,988 654,989 671,988 694,988 667,1000 600,1012','720,987 726,953 743,955 770,954 799,955 805,963 770,974 743,982','1055,965 1069,950 1077,943 1109,941 1131,944 1176,944 1182,908 1192,911 1216,912 1223,916 1283,918 1216,933 1176,946 1087,961','1466,959 1470,951 1488,947 1509,950 1515,947 1529,947 1535,952 1582,950 1509,957','1650,954 1662,951 1676,951 1684,954'].forEach(s => poly(s, ORANGE));
['247,956 286,956 396,1003 375,1008 363,1002 327,1002 308,1004 304,995 291,997 286,967 282,961 259,962 255,957','386,1008 427,1008 416,1010 412,1017 398,1019 394,1010','549,1013 579,1017 576,1035 569,1029 557,1027 551,1020','522,1013 540,1013 535,1016','825,960 839,957 872,960 899,963 859,965 850,967 840,963','926,964 944,965 930,969','1300,916 1341,922 1374,932 1402,942 1435,953 1464,960 1455,962 1415,962 1411,958 1396,959 1390,963 1360,963 1356,945 1346,946 1342,931 1307,927 1302,918','1609,952 1631,955 1627,963 1614,963','1719,955 1741,955 1847,963 1847,966 1794,965 1723,964','1847,964 1851,965 1850,992'].forEach(s => poly(s, BLUE));
line('286,967 291,997 304,995 308,1004 327,1002 363,1002 375,1008 394,1010 398,1019 412,1017 416,1010 470,1010 535,1016 549,1013 557,1027 569,1029 576,1035 579,1017', ORANGE);
line('1302,918 1307,927 1342,931 1346,946 1356,945 1360,963 1390,963 1396,959 1411,958 1415,962 1464,960', ORANGE);
line('1609,952 1614,963 1627,963 1631,954 1719,953 1723,964 1847,964 1851,990', ORANGE);
['76,987 78,927 80,895 83,923 86,957 92,965 98,973 80,974','355,1010 363,1004 375,1005 392,997 400,1003 412,995 418,986 439,983 443,989 457,992 467,980 486,986 535,985 545,980 549,986 531,988 486,991 449,997 400,1007','579,987 582,949 588,950 600,960 612,967 625,974 605,976 590,981','718,988 725,955 735,963 750,973 765,976 745,977 730,981','980,993 1030,988 1054,986 1065,976 1077,969 1090,973 1115,981 1080,984 1040,991','1178,985 1182,958 1195,971 1212,980 1190,983','1390,1007 1398,999 1413,995 1418,996 1431,992 1453,989 1455,997 1423,1002','1474,1001 1484,992 1510,995 1520,980 1530,982 1536,987 1560,986 1609,985 1609,988 1560,991 1500,999','1630,988 1634,981 1680,984 1709,985 1660,987','1821,997 1847,989 1847,994 1825,998'].forEach(s => poly(s, GREEN));
line('51,985 67,988 71,993 75,993 78,970 98,973 108,992 120,1009 125,991 140,990 170,999 175,989 200,991 245,990 249,997 259,1001 280,997 285,1001 290,1034 294,1027 306,1020 314,1028 327,1013 339,1010 343,1019 355,1011 400,1003', GREEN);
line('549,986 557,996 565,993 570,998 577,993 582,950 625,974 632,978 636,990 641,996 655,995 667,988 718,989 725,955 765,976 800,985 805,994 830,992 845,997 865,993 870,998 905,993 925,992 930,998 944,992 960,996 980,993 1054,986 1077,969 1115,981 1140,988 1157,997 1177,993 1182,958 1212,980 1220,987 1247,993 1276,995 1281,1002 1305,1006 1341,1000 1346,1015 1356,1011 1360,1024 1390,1006 1453,989 1460,1025 1468,1010 1484,993', GREEN);
line('1609,987 1613,997 1625,992 1634,981 1709,985 1718,985 1723,995 1747,996 1762,992 1768,1015 1790,1010 1800,1002 1847,990 1851,1008', GREEN);
line('51,1014 79,1011 84,1009 123,1000 147,994 180,987 217,977 247,970 265,968 286,966 331,968 371,970 406,978 470,989 500,994 550,1004 575,1011 640,1008 689,1005 729,1001 756,996 787,990 823,983 872,974 944,968 988,963 1046,963 1113,961 1180,956 1225,948 1280,939 1304,935 1341,931 1378,931 1423,935 1472,937 1525,943 1574,948 1627,955 1688,954 1770,954 1851,958', '#993300', 3);
line('51,995 71,990 84,983 104,977 122,976 150,971 175,963 194,957 200,960 220,960 247,956 286,956 400,1006 470,1011 550,1013 579,1017 640,1005 654,1002 694,988 718,989 743,982 770,974 810,963 837,959 912,964 957,965 1055,965 1087,961 1176,945 1216,933 1283,918 1298,916 1341,922 1374,932 1402,942 1435,953 1464,960 1509,957 1582,950 1611,952 1627,955 1721,955 1790,962 1847,964', BLUE);

const volUp = { 80:895, 125:1010, 120:1021, 175:1021, 105:1023, 290:986, 309:1023, 344:1018, 249:1027, 259:1029, 399:1021, 418:1027, 369:1027, 443:1027, 468:1029, 552:1023, 572:1027, 582:972, 636:1013, 726:986, 806:1029, 860:1031, 870:1026, 930:1025, 944:1030, 955:1030, 1060:1028, 1069:1027, 1077:1028, 1157:1029, 1182:986, 1222:1030, 1281:1025, 1306:1025, 1346:1012, 1361:1009, 1396:1030, 1415:1030, 1460:983, 1470:1020, 1519:1028, 1534:1028, 1614:1020, 1634:1021, 1723:1023, 1768:996, 1851:990 };
const volDown = { 85:953, 110:1026, 115:1028, 295:1028, 300:1030, 314:1029, 557:1027, 641:1031, 1064:1031, 1073:1030, 1475:1032 };
const tall = [...Object.keys(volUp), ...Object.keys(volDown)].map(Number);
for (let i = 0; i < 362; i++) {
  const x = Math.round(51 + i * 4.980);
  if (tall.some(t => Math.abs(t - x) < 3)) continue;
  const k = (i * 37 + (i >> 2) * 11) % 10;
  const c = k % 3 ? UP : DOWN;
  if (k < 3) hollow(x, 1033 + k, 1036, c); else rect(x - 1, 1036, 4, 1, c);
}
for (const x in volUp) hollow(+x, volUp[x], 1036, UP);
for (const x in volDown) hollow(+x, volDown[x], 1036, DOWN);

rect(1862, 77, 3, 362, UP);
rect(1862, 439, 3, 440, DOWN);
rect(49, 880, 1817, 1, '#909090');
rect(945, 77, 1, 961, RED);
rect(49, 276, 1814, 1, RED);

/* text over the plot, placed in percent of the plot */
function note(text, y, color, x) {
  const el = document.createElement('span');
  el.className = 'note';
  el.textContent = text;
  el.style.color = color;
  el.style.top = (y - VY) / VH * 100 + '%';
  if (x) el.style.left = (x - VX) / VW * 100 + '%';
  else el.style.right = '4px';
  plot.appendChild(el);
}
note('최고 6,550 (-2,60%, 12:25)', 125, RED, 1017);
note('최저 6,280 (1,59%, 09:00)', 843, BLUE, 138);
note('전일종가 6,430 (0,00%)', 449, '#993300', 1738);
note('당일시가 6,340 (-1,40%)', 698, '#00e000', 1732);
note('(고가+저가+종가)/3 지수 28: 6,426', 123, '#ff6600', 1682);
note('저가/지수 24', 123, '#000', 1751);
note('12', 123, '#000', 1850);
note('120: 6,420', 134, '#c0c0c0');
note('10: 6,426', 134, '#00ccff');
note('96:', 146, '#000', 1814);
note('480: 6,418', 146, '#000');
note('180: 6,417', 158, '#ffcc00');
note('5: 6,425', 158, RED);
note('10: 6,426', 170, BLUE);
note(': 0', 926, RED);
note(': 0', 938, BLUE);
note(': 0', 950, '#ff0033');
note('KVO: -6,807', 962, GREEN);
note('KVO signal: -6,855', 974, '#b8f0f0');
note('Signal 60: -24,856', 978, '#993300');
note('Signal 100: -24,198', 990, ORANGE);
note('Signal 150: -23,478', 1002, '#00e5ff');
note('54,177', 1002, '#000');
note('OBV: -26,188', 1014, ORANGE);
note('Signal 24: -24,712', 1026, BLUE);

/* axes */
function axis(id, top, height, width, labels, ticks) {
  const host = document.getElementById(id);
  const s = add('svg', { class: 'ticks', viewBox: `0 0 ${width} ${height}`, preserveAspectRatio: 'none' }, host);
  ticks.forEach(([x, y, w]) => add('path', { d: `M${x} ${y - top + .5}h${w}`, 'shape-rendering': 'crispEdges' }, s));
  labels.forEach(([text, y, cls = 'lab', extra]) => {
    const el = document.createElement('span');
    el.className = cls;
    el.textContent = text;
    el.style.top = (y - top) / height * 100 + '%';
    if (extra) { const e = document.createElement('em'); e.textContent = extra; el.appendChild(e); }
    host.appendChild(el);
  });
}
axis('leftMain', 77, 803, 41,
  [['6,510',223],['6,477',310],['6,461',354],['6,445',397],['6,429',441],['6,413',485],['6,396',530],['6,364',617],['6,348',661],['6,332',706],['6,316',750],['6,300',794],['6,490',276,'box','+0,93%'],['6,380',574,'cur'],['1,78%',587,'lab pct']], []);
const rt = [];
for (let i = 0; i <= 40; i++) rt.push([0, Math.round(110 + i * 18.680), i % 5 ? 2 : 6]);
axis('rightMain', 77, 803, 46,
  [['70,00',109],['65,00',202],['60,00',296],['55,00',389],['50,00',483],['40,00',670],['35,00',763],['30,00',856],['6,490',276,'box','+0,93%'],['6,380',574,'cur'],['-0,78%',587,'lab pct'],['LC:1,59',84,'lab flush hi'],['HC:-2,60',96,'lab flush lo']], rt);
const lt = [];
for (let i = 0; i < 24; i++) lt.push([39, Math.round(884 + i * 6.600), 2]);
[902,935,968,1001,1034].forEach(y => lt.push([35, y, 6]));
axis('leftSub', 881, 157, 41, [['20,000',902],['22,500',935],['25,000',967],['27,500',1001]], lt);
const st = [];
for (let i = 0; i < 15; i++) st.push([0, Math.round(895 + i * 9.450), i % 2 ? 5 : 2]);
axis('rightSub', 881, 157, 46, [['7,000',904],['6,000',923],['5,000',942],['4,000',960],['3,000',979],['2,000',998],['1,000',1017]], st);

const timeText = { 83:'09:00',123:'09:01',168:'09:02',217:'09:03',247:'09:04',297:'09:08',331:'09:10',371:'09:13',406:'09:17',435:'09:21',470:'09:28',515:'09:31',550:'09:36',579:'09:39',619:'09:41',654:'09:46',688:'09:50',718:'09:54',753:'10:02',783:'10:12',812:'10:19',842:'10:30',996:'11:15',1026:'11:26',1056:'11:39',1085:'11:48',1125:'12:04',1155:'12:22',1190:'12:26',1219:'12:31',1249:'12:34',1279:'12:42',1343:'13:00',1373:'13:02',1403:'13:13',1433:'13:27',1467:'13:40',1522:'14:07',1557:'14:18',1591:'14:38',1626:'14:47',1671:'15:00',1701:'15:06',1730:'15:09',1765:'15:13',1795:'15:16' };
const times = document.getElementById('times');
[49, ...gridX].forEach(x => {
  const el = document.createElement('span');
  el.className = 'time';
  el.textContent = x === 49 ? '15:19' : timeText[x] || '';
  el.style.left = (x - VX) / VW * 100 + '%';
  times.appendChild(el);
});
```
